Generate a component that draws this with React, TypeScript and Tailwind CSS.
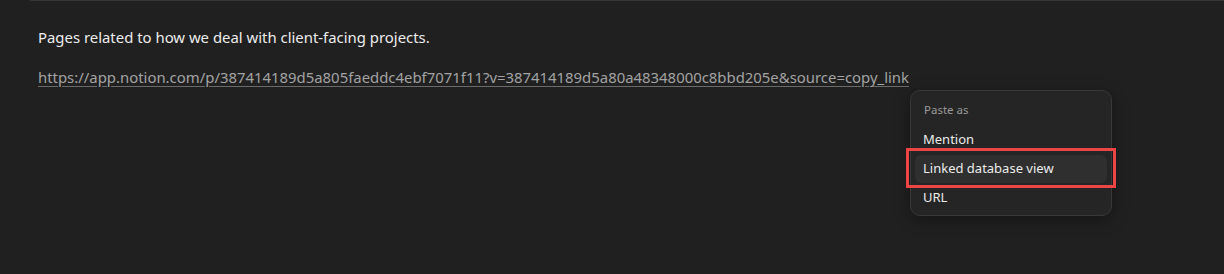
const font = { fontFamily: '"Noto Sans", "Open Sans", sans-serif' }

const options = ['Mention', 'Linked database view', 'URL']

function PasteMenu() {
  return (
    <div className="absolute left-[910px] top-[90px] flex w-[202px] flex-col gap-px rounded-[10px] border border-[#383838] bg-[#252525] px-[4px] pb-[3px] pt-[11px] shadow-[0_4px_16px_rgba(0,0,0,0.35)]">
      <div className="px-[9px] pb-[7px] text-[11.5px] leading-[16px] text-[#9a9a9a]">Paste as</div>
      {options.map((o) => (
        <div key={o} className="relative">
          <div
            className={
              'flex h-[28px] items-center rounded-[6px] px-[8px] text-[13px] text-[#ececec] ' +
              (o === 'Linked database view' ? 'bg-[#2f2f2f]' : '')
            }
          >
            {o}
          </div>
          {o === 'Linked database view' && (
            <div className="pointer-events-none absolute -left-[9px] -right-[9px] -top-[7px] -bottom-[5px] border-[3px] border-[#ef4444]" />
          )}
        </div>
      ))}
    </div>
  )
}

export default function App() {
  return (
    <div className="relative h-[274px] w-[1224px] overflow-hidden bg-[#202020]" style={font}>
      <div className="ml-[30px] h-px bg-[#363636]" />
      <div className="px-[38px] pt-[26px]">
        <p className="text-[14.9px] leading-[20px] text-[#ececec]">
          Pages related to how we deal with client-facing projects.
        </p>
        <p className="mt-[20px] text-[14.9px] leading-[20px]">
          <a className="text-[#a3a3a3] underline decoration-[#6a6a6a] underline-offset-[3px]">
            https://app.notion.com/p/387414189d5a805faeddc4ebf7071f11?v=387414189d5a80a48348000c8bbd205e&amp;source=copy_link
          </a>
        </p>
      </div>
      <PasteMenu />
    </div>
  )
}
